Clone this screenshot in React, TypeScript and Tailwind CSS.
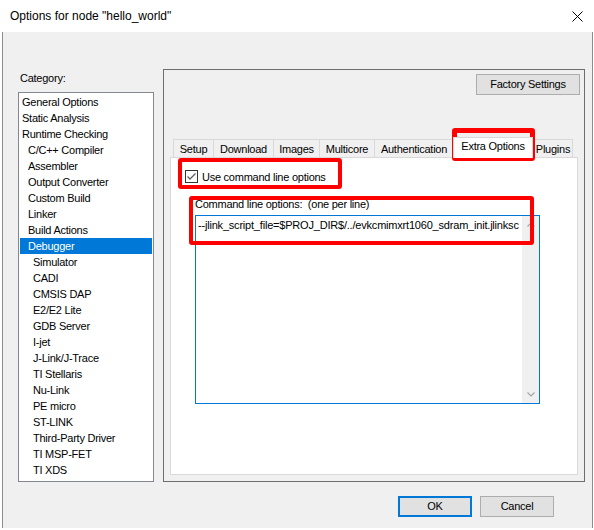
import React from 'react';

type Item = { label: string; level: number; selected?: boolean };

const categories: Item[] = [
  { label: 'General Options', level: 0 },
  { label: 'Static Analysis', level: 0 },
  { label: 'Runtime Checking', level: 0 },
  { label: 'C/C++ Compiler', level: 1 },
  { label: 'Assembler', level: 1 },
  { label: 'Output Converter', level: 1 },
  { label: 'Custom Build', level: 1 },
  { label: 'Linker', level: 1 },
  { label: 'Build Actions', level: 1 },
  { label: 'Debugger', level: 1, selected: true },
  { label: 'Simulator', level: 2 },
  { label: 'CADI', level: 2 },
  { label: 'CMSIS DAP', level: 2 },
  { label: 'E2/E2 Lite', level: 2 },
  { label: 'GDB Server', level: 2 },
  { label: 'I-jet', level: 2 },
  { label: 'J-Link/J-Trace', level: 2 },
  { label: 'TI Stellaris', level: 2 },
  { label: 'Nu-Link', level: 2 },
  { label: 'PE micro', level: 2 },
  { label: 'ST-LINK', level: 2 },
  { label: 'Third-Party Driver', level: 2 },
  { label: 'TI MSP-FET', level: 2 },
  { label: 'TI XDS', level: 2 },
];

const tabs = [
  { label: 'Setup', w: 'w-[40px]' },
  { label: 'Download', w: 'w-[60px]' },
  { label: 'Images', w: 'w-[46px]' },
  { label: 'Multicore', w: 'w-[55px]' },
  { label: 'Authentication', w: 'w-[79px]' },
  { label: 'Extra Options', w: 'w-[80px]', active: true },
  { label: 'Plugins', w: 'w-[40px]' },
];

const indent = ['pl-[2px]', 'pl-[8px]', 'pl-[13px]'];

function Chevron({ up }: { up?: boolean }) {
  return (
    <svg width="8" height="5" viewBox="0 0 8 5" className={up ? '' : 'rotate-180'}>
      <polyline points="0.5,4.5 4,1 7.5,4.5" fill="none" stroke="#a6a6a6" strokeWidth="1.2" />
    </svg>
  );
}

export default function App() {
  return (
    <div className="relative w-[594px] h-[530px] bg-white text-black text-[11px] tracking-[-0.25px] font-['Liberation_Sans',Arial,sans-serif]">
      <div className="ml-[2px] w-[591px] h-[528px] flex flex-col">
        {/* title bar */}
        <div className="h-[32px] bg-white flex items-center justify-between pl-[8px] pr-[10px]">
          <span className="text-[12px] tracking-normal">Options for node "hello_world"</span>
          <svg width="11" height="11" viewBox="0 0 11 11">
            <path d="M0.5 0.5 L10.5 10.5 M10.5 0.5 L0.5 10.5" stroke="#000" strokeWidth="1" />
          </svg>
        </div>

        {/* body */}
        <div className="flex-1 bg-[#f0f0f0] border-x border-[#8c8c8c] flex flex-col">
          <div className="flex pl-[15px] pt-[37px]">
            {/* category list */}
            <div className="w-[136px]">
              <div className="h-[23px] pt-[2px] pl-[2px] leading-[14px]">Category:</div>
              <div className="h-[390px] border border-[#828790] bg-white pt-[1px]">
                {categories.map((c) => (
                  <div
                    key={c.label}
                    className={`mx-[1px] h-[16px] leading-[16px] whitespace-nowrap ${indent[c.level]} ${
                      c.selected ? 'bg-[#0078d7] text-white' : ''
                    }`}
                  >
                    {c.label}
                  </div>
                ))}
              </div>
            </div>

            {/* options frame */}
            <div className="ml-[9px] w-[422px] h-[413px] border border-[#6e6e6e] flex flex-col">
              <div className="flex justify-end mt-[4px] mr-[4px]">
                <button className="w-[104px] h-[21px] bg-[#e1e1e1] border border-[#adadad] leading-[19px]">
                  Factory Settings
                </button>
              </div>

              <div className="mt-[42px] mx-[6px] h-[20px] flex items-end pl-[3px]">
                {tabs.map((t, i) =>
                  t.active ? (
                    <div
                      key={t.label}
                      className={`${t.w} h-[21px] -mb-[1px] relative z-10 bg-white border-x border-t border-[#d9d9d9] flex justify-center pt-[1px] leading-[14px]`}
                    >
                      {t.label}
                    </div>
                  ) : (
                    <div
                      key={t.label}
                      className={`${t.w} h-[18px] border-t border-l border-[#d9d9d9] ${
                        i === tabs.length - 1 ? 'border-r' : ''
                      } flex items-center justify-center leading-[14px]`}
                    >
                      {t.label}
                    </div>
                  ),
                )}
              </div>

              <div className="mx-[6px] h-[318px] border border-[#d9d9d9] bg-white flex flex-col">
                <div className="mt-[12px] ml-[14px] h-[13px] flex items-center gap-[4px]">
                  <div className="w-[13px] h-[13px] border border-[#333333] bg-white flex items-center justify-center">
                    <svg width="11" height="11" viewBox="0 0 11 11">
                      <polyline points="1.5,5.5 4,8 9.5,2.5" fill="none" stroke="#5f5f5f" strokeWidth="1.3" />
                    </svg>
                  </div>
                  <span className="leading-[14px]">Use command line options</span>
                </div>

                <div className="mt-[14px] ml-[24px] leading-[14px]">Command line options:&nbsp; (one per line)</div>

                <div className="mt-[4px] ml-[24px] w-[345px] h-[189px] border border-[#0078d7] flex">
                  <div className="flex-1 whitespace-nowrap pl-[2px] pt-[2px] leading-[14px] tracking-[-0.2px]">
                    --jlink_script_file=$PROJ_DIR$/../evkcmimxrt1060_sdram_init.jlinksc
                  </div>
                  <div className="w-[17px] bg-[#f0f0f0] flex flex-col justify-between">
                    <div className="h-[17px] flex items-center justify-center">
                      <Chevron up />
                    </div>
                    <div className="h-[17px] flex items-center justify-center">
                      <Chevron />
                    </div>
                  </div>
                </div>
              </div>
            </div>
          </div>

          {/* dialog buttons */}
          <div className="mt-[14px] pr-[38px] flex justify-end gap-[8px]">
            <button className="w-[74px] h-[21px] bg-[#e1e1e1] border-2 border-[#0078d7] leading-[17px]">OK</button>
            <button className="w-[74px] h-[21px] bg-[#e1e1e1] border border-[#adadad] leading-[19px]">Cancel</button>
          </div>
        </div>
      </div>

      {/* red annotation boxes */}
      <div className="absolute left-[452px] top-[128px] w-[83px] h-[33px] border-[5px] border-[#ff0000] rounded-[3px]" />
      <div className="absolute left-[178px] top-[158px] w-[164px] h-[31px] border-[4px] border-[#ff0000] rounded-[3px]" />
      <div className="absolute left-[189px] top-[196px] w-[345px] h-[49px] border-[4px] border-[#ff0000] rounded-[3px]" />
    </div>
  );
}
